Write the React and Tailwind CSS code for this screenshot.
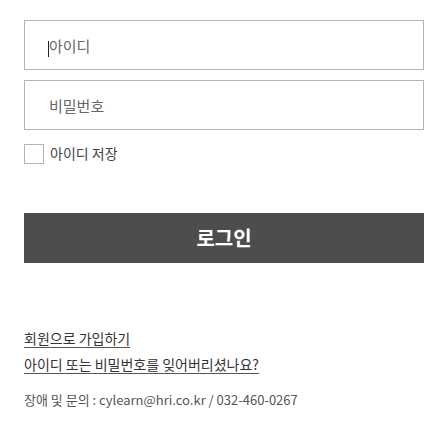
import React from "react";

export default function App() {
  const font = { fontFamily: '"Noto Sans CJK KR", "Noto Sans", sans-serif' };
  return (
    <div className="w-[444px] h-[427px] bg-white" style={font}>
      <div className="px-6 pt-5 flex flex-col">
        <div className="relative">
          <input
            className="w-[400px] h-[50px] border border-[#b4b4b4] pl-6 text-[15px] text-[#333] placeholder:text-[#666] outline-none"
            style={font}
            placeholder="아이디"
          />
          <span className="absolute left-6 top-[21px] w-px h-[16px] bg-[#222]" />
        </div>
        <input
          type="password"
          className="mt-[10px] w-[400px] h-[50px] border border-[#b4b4b4] pl-6 text-[15px] text-[#333] placeholder:text-[#666] outline-none"
          style={font}
          placeholder="비밀번호"
        />
        <label className="mt-[14px] flex items-center h-5 gap-[6px]">
          <span className="w-5 h-5 border border-[#b4b4b4] bg-white" />
          <span className="text-[14px] leading-4 pb-[3px] text-[#444]">아이디 저장</span>
        </label>
        <button
          className="mt-[49px] w-[400px] h-[50px] bg-[#4d4d4d] text-white text-[20px] font-bold"
          style={font}
        >
          로그인
        </button>
        <div className="mt-[66px] flex flex-col items-start gap-[7px]">
          <a className="text-[14px] leading-[18px] text-[#333] border-b border-[#555]">회원으로 가입하기</a>
          <a className="text-[14px] leading-[18px] text-[#333] border-b border-[#555]">아이디 또는 비밀번호를 잊어버리셨나요?</a>
        </div>
        <p className="mt-[17px] text-[13px] leading-[18px] text-[#555]">
          장애 및 문의 : cylearn@hri.co.kr / 032-460-0267
        </p>
      </div>
    </div>
  );
}
